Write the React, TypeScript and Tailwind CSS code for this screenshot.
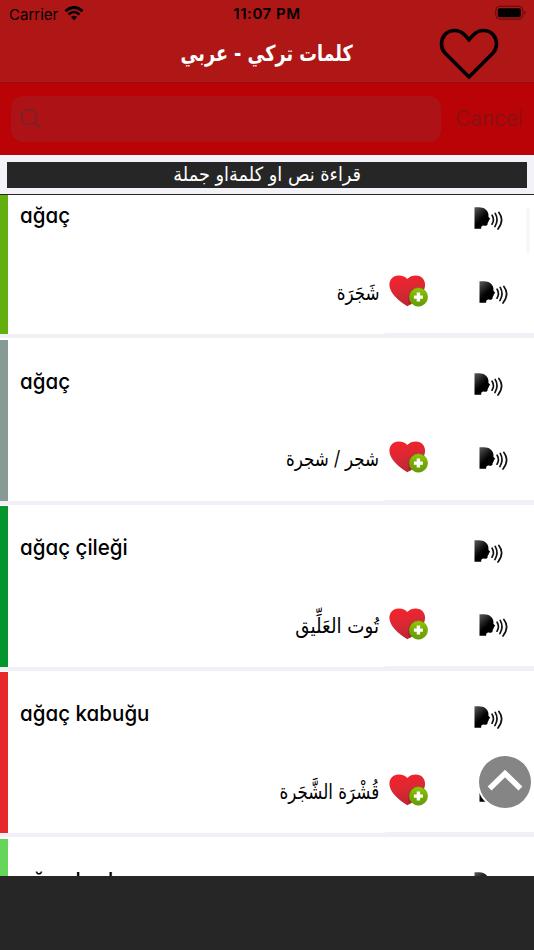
import React from 'react';

interface Word {
  turkish: string;
  arabic: string;
  barClass: string;
  arabicClass: string;
}

const WORDS: Word[] = [
  { turkish: 'ağaç', arabic: 'شَجَرَة', barClass: 'bg-[#62b010]', arabicClass: 'scale-x-[0.815]' },
  { turkish: 'ağaç', arabic: 'شجر / شجرة', barClass: 'bg-[#879a95]', arabicClass: 'scale-x-[0.815]' },
  { turkish: 'ağaç çileği', arabic: 'تُوت العَلِّيق', barClass: 'bg-[#04962c]', arabicClass: 'scale-x-[0.89]' },
  { turkish: 'ağaç kabuğu', arabic: 'قُشْرَة الشَّجَرة', barClass: 'bg-[#e8292b]', arabicClass: 'scale-x-[0.815]' },
  { turkish: 'ağaç budama', arabic: '', barClass: 'bg-[#66d65b]', arabicClass: '' },
];

const SpeakIcon: React.FC = () => (
  <svg width="30" height="24" viewBox="0 0 30 24" className="block">
    <defs>
      <linearGradient id="head" x1="0" y1="0" x2="0.7" y2="1">
        <stop offset="0" stopColor="#5c5c5c" />
        <stop offset="0.45" stopColor="#151515" />
        <stop offset="0.6" stopColor="#000" />
      </linearGradient>
    </defs>
    <path
      d="M0.5 0.2H5C10 0.2 14 3 14.4 7.2C14.5 8.6 14.3 9.2 14.6 9.9L16.2 11.8C16.3 12.4 15.6 12.6 14.9 12.7L14.9 14.3L13.9 14.9L14.3 15.5L13.6 16.1L13.6 17.2C13.2 18.6 11.5 18.9 9 18.6L7.2 19.7V21.7H0.5Z"
      fill="url(#head)"
    />
    <g fill="none" stroke="#111" strokeWidth="1.7" strokeLinecap="round">
      <path d="M18.1 8.2Q20.8 12.6 18 17.2" />
      <path d="M21.2 6.4Q25 12.7 20.9 19.6" />
      <path d="M24.9 5.4Q30.8 13.2 24 22" />
    </g>
  </svg>
);

const AddFavoriteIcon: React.FC = () => (
  <svg width="40" height="32" viewBox="0 0 40 32" className="block">
    <defs>
      <linearGradient id="heart" x1="0.3" y1="0" x2="0.6" y2="1">
        <stop offset="0" stopColor="#f3232b" />
        <stop offset="0.45" stopColor="#dc2833" />
        <stop offset="1" stopColor="#b82634" />
      </linearGradient>
      <linearGradient id="badge" x1="0" y1="0" x2="0" y2="1">
        <stop offset="0" stopColor="#94c80a" />
        <stop offset="0.5" stopColor="#76ab00" />
        <stop offset="1" stopColor="#689c08" />
      </linearGradient>
    </defs>
    <path
      d="M18.3 4.1C20.5 1.2 23.5 0.4 26.8 0.4C32.5 0.4 36.3 4.5 36.1 10.3C35.8 18 27 26.5 18.4 31.2C10 26.5 0.5 18 0.4 10C0.4 4.5 4.2 0.6 9.5 0.5C13.6 0.4 16.3 1.6 18.3 4.1Z"
      fill="url(#heart)"
    />
    <path d="M24.5 13.5C19.5 16 18 23 20.3 30.2L25 27.5Z" fill="#a5121d" opacity="0.6" />
    <circle cx="29.4" cy="22" r="9.2" fill="url(#badge)" stroke="#669d14" strokeWidth="0.6" />
    <path d="M29.4 17.6V26.6M24.9 22.1H33.9" stroke="#fff" strokeWidth="3.4" />
  </svg>
);

const StatusBar: React.FC = () => (
  <div className="flex h-7 items-center justify-between pl-[9px] pr-[7px] text-black">
    <div className="flex w-[120px] items-center gap-[6px]">
      <span className="text-[15px] leading-none">Carrier</span>
      <svg width="20" height="15" viewBox="0 0 19 15" fill="none" stroke="#000" className="-mt-[2px]">
        <path d="M1 5.2Q9.5 -2.4 18 5.2" strokeWidth="2.9" />
        <path d="M4 8.5Q9.5 3.5 15 8.5" strokeWidth="2.6" />
        <path d="M6.4 11L9.5 14.3L12.6 11Q9.5 8.5 6.4 11Z" fill="#000" stroke="none" />
      </svg>
    </div>
    <span className="-ml-[2px] -mt-px text-[15px] font-semibold leading-none tracking-[0.55px]">11:07 PM</span>
    <div className="flex w-[120px] justify-end">
      <svg width="32" height="16" viewBox="0 0 32 16" className="-mt-[2px]">
        <rect x="0.8" y="1.2" width="27" height="13" rx="4" fill="none" stroke="#5e0b0d" />
        <rect x="2.8" y="3.2" width="23" height="9" rx="1.6" fill="#000" />
        <path d="M29.4 5.4Q31.8 7.7 29.4 10Z" fill="#5e0b0d" />
      </svg>
    </div>
  </div>
);

const NavBar: React.FC = () => (
  <div className="relative flex h-[55px] items-start justify-center">
    <h1 dir="rtl" className="mt-[10px] scale-x-[0.8] whitespace-nowrap font-['DejaVu_Sans',sans-serif] text-[22px] font-bold leading-[32px] text-white">
      كلمات تركي - عربي
    </h1>
    <svg width="60" height="52" viewBox="0 0 60 52" className="absolute left-[439px] top-0">
      <path
        d="M30 11.8L26 7.3C20 0.8 11 1.2 6 6.5C1.3 12 1.4 20 6 25L30 49L54 25C58.6 20 58.7 12 54 6.5C49 1.2 40 0.8 34 7.3Z"
        fill="none"
        stroke="#000"
        strokeWidth="3.6"
      />
    </svg>
  </div>
);

const SearchBar: React.FC = () => (
  <div className="flex h-[72px] items-center bg-[#b90306] pl-[11px]">
    <div className="flex h-[46px] w-[430px] shrink-0 items-center rounded-xl bg-[#ad1216] pl-[9px]">
      <svg width="22" height="22" viewBox="0 0 22 22" fill="none" stroke="#74242a">
        <circle cx="9" cy="9" r="7.4" strokeWidth="1.7" />
        <path d="M14.5 14.5L20.5 20.2" strokeWidth="2.2" />
      </svg>
    </div>
    <span className="-mt-[2px] ml-[14px] text-[21px] leading-none tracking-[-0.25px] text-[#8d1013]">Cancel</span>
  </div>
);

const WordRow: React.FC<{ word: Word }> = ({ word }) => (
  <div className="flex h-[166.25px] shrink-0 border-b-4 border-[#f1f0f6] bg-white">
    <div className={`mt-[1.5px] w-2 shrink-0 ${word.barClass}`} />
    <div className="flex min-w-0 grow flex-col">
      <div className="flex h-[81px] items-start justify-between pl-3 pr-[30px] pt-[27.5px]">
        <span className="origin-left scale-x-[0.935] whitespace-nowrap text-[22px] font-medium leading-[30px] text-black [font-feature-settings:'cv11']">
          {word.turkish}
        </span>
        <div className="mt-[7.5px]">
          <SpeakIcon />
        </div>
      </div>
      <div className="flex grow items-start pr-[25px]">
        <div className="flex grow justify-end pr-[10px] pt-[24px]">
          <span dir="rtl" className={`origin-right whitespace-nowrap font-['DejaVu_Sans',sans-serif] text-[20.5px] leading-[32px] text-black ${word.arabicClass}`}>
            {word.arabic}
          </span>
        </div>
        <div className="mt-[22px]">
          <AddFavoriteIcon />
        </div>
        <div className="ml-[50px] mt-[28px]">
          <SpeakIcon />
        </div>
      </div>
      <div className="ml-[377px] h-px shrink-0 bg-[#f1f0f6]" />
    </div>
  </div>
);

export default function App() {
  return (
    <div className="relative flex h-[950px] w-[534px] flex-col overflow-hidden bg-[#262626] font-['Inter',sans-serif]">
      <header className="h-[83px] shrink-0 border-b border-[#8d1013] bg-[#af1616]">
        <StatusBar />
        <NavBar />
      </header>
      <SearchBar />
      <div className="h-10 shrink-0 border-b border-[#262626] bg-[#f3f2f8] px-[7px] pt-[7px]">
        <div className="flex h-[26px] items-center justify-center bg-[#262626]">
          <span dir="rtl" className="scale-x-[0.91] whitespace-nowrap font-['DejaVu_Sans',sans-serif] text-[19.5px] leading-[26px] text-white">
            قراءة نص او كلمةاو جملة
          </span>
        </div>
      </div>
      <main className="flex h-[681px] shrink-0 flex-col overflow-hidden bg-white">
        <div className="-mt-[23px] flex flex-col">
          {WORDS.map((word, index) => (
            <WordRow key={index} word={word} />
          ))}
        </div>
      </main>

      {/* scroll indicator */}
      <div className="absolute left-[526px] top-[207px] h-[46px] w-1 rounded-full bg-[#f7f7f7]" />

      <button aria-label="Scroll to top" className="absolute left-[479px] top-[756px] flex size-[52px] items-center justify-center rounded-full bg-[#858585] ring-2 ring-white">
        <svg width="36" height="24" viewBox="0 0 36 24" fill="none" stroke="#fff" strokeWidth="5.5" className="-mt-[4px]">
          <path d="M2.6 20.5L18 5.5L33.4 20.5" />
        </svg>
      </button>
    </div>
  );
}
